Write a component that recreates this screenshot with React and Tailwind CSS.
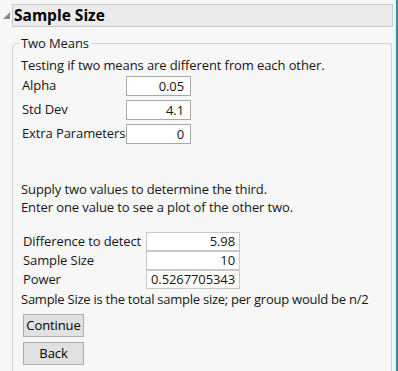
import React from "react";

const font = { fontFamily: '"Open Sans", "Noto Sans", sans-serif', letterSpacing: "-0.1px" };

const Field = ({ label, value }) => (
	<div className="flex items-center h-[24px]">
		<div className="w-[104px] shrink-0 whitespace-nowrap">{label}</div>
		<div className="w-[65px] h-[20px] border border-[#a8a8a8] bg-white text-right pr-[6px] leading-[18px]">
			{value}
		</div>
	</div>
);

const Field2 = ({ label, value }) => (
	<div className="flex items-center h-[19px]">
		<div className="w-[123px] shrink-0 whitespace-nowrap">{label}</div>
		<div className="w-[94px] h-[19px] border border-[#c8c8c8] bg-white text-right pr-[4px] leading-[17px]">
			{value}
		</div>
	</div>
);

export default function App() {
	return (
		<div
			className="w-[398px] h-[371px] bg-[#f7f7f7] text-[13px] text-[#161616] flex overflow-hidden"
			style={font}>
			<div className="w-[394px] pt-[4px] flex flex-col">
				{/* Header */}
				<div className="flex items-center mr-[1px]">
					<div className="w-[12px] flex justify-center">
						<svg width="9" height="9" viewBox="0 0 9 9">
							<polygon points="8,1 8,8 1,8" fill="#8a8a8a" />
						</svg>
					</div>
					<div className="flex-1 h-[23px] bg-[#ebebeb] border border-[#c9c9c9] flex items-center pl-[1px]">
						<span className="text-[15.5px] font-bold leading-none text-black tracking-normal">
							Sample Size
						</span>
					</div>
				</div>

				{/* Group */}
				<div className="relative mt-[16px] ml-[12px] mr-[2px] flex-1 border-l border-t border-r border-[#d2d2d2] rounded-tl-[5px] rounded-tr-[3px] pl-[8px] pt-[12px]">
					<div className="absolute -top-[10px] left-[6px] px-[2px] bg-[#f7f7f7] leading-[18px]">
						Two Means
					</div>
					<div className="leading-[18px]">
						Testing if two means are different from each other.
					</div>
					<div className="pl-[1px]">
						<Field label="Alpha" value="0.05" />
						<Field label="Std Dev" value="4.1" />
						<Field label="Extra Parameters" value="0" />
					</div>
					<div className="mt-[34px] leading-[18px]">
						<div>Supply two values to determine the third.</div>
						<div>Enter one value to see a plot of the other two.</div>
					</div>
					<div className="pl-[2px] mt-[16px]">
						<Field2 label="Difference to detect" value="5.98" />
						<Field2 label="Sample Size" value="10" />
						<Field2 label="Power" value="0.5267705343" />
					</div>
					<div className="leading-[20px] whitespace-nowrap tracking-[-0.25px]">
						Sample Size is the total sample size; per group would be n/2
					</div>
					<div className="pl-[2px] flex flex-col gap-[5px] mt-[5px]">
						<button className="w-[61px] h-[23px] bg-[#e1e1e1] border border-[#adadad] text-[13px] leading-none text-black">
							Continue
						</button>
						<button className="w-[61px] h-[23px] bg-[#e1e1e1] border border-[#adadad] text-[13px] leading-none text-black">
							Back
						</button>
					</div>
				</div>
			</div>
			<div className="w-[2px] bg-[#e3f3f8]" />
			<div className="w-[2px] bg-[#3f87a6]" />
		</div>
	);
}
